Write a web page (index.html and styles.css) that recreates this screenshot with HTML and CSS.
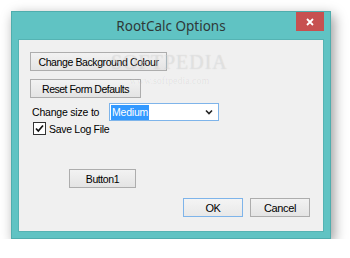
FILE: index.html
```html
<!DOCTYPE html>
<html lang="en">
<head>
    <meta charset="UTF-8">
    <title>RootCalc Options</title>
    <link rel="stylesheet" href="styles.css">
</head>
<body>
    <div class="window">
        <div class="titlebar">
            <span></span>
            <span class="title">RootCalc Options</span>
            <span class="close-btn">
                <svg width="8" height="8" viewBox="0 0 8 8">
                    <path d="M1 1 L7 7 M7 1 L1 7" stroke="#fff" stroke-width="1.8" fill="none"/>
                </svg>
            </span>
        </div>

        <div class="client">
            <button class="btn btn-bg">Change Background Colour</button>
            <button class="btn btn-reset">Reset Form Defaults</button>

            <div class="size-row">
                <span class="size-label">Change size to</span>
                <div class="combo">
                    <span class="combo-value">Medium</span>
                    <svg class="combo-arrow" width="8" height="6" viewBox="0 0 8 6">
                        <path d="M1 1.5 L4 4.5 L7 1.5" stroke="#222" stroke-width="1.6" fill="none"/>
                    </svg>
                </div>
            </div>

            <div class="check-row">
                <span class="checkbox">
                    <svg width="11" height="11" viewBox="0 0 11 11">
                        <path d="M2 5.5 L4.3 8 L9 2.5" stroke="#111" stroke-width="1.7" fill="none"/>
                    </svg>
                </span>
                <span class="check-label">Save Log File</span>
            </div>

            <button class="btn btn-one">Button1</button>

            <div class="footer">
                <button class="btn btn-ok">OK</button>
                <button class="btn btn-cancel">Cancel</button>
            </div>

            <div class="watermark">
                <span class="wm-big">SOFTPEDIA</span>
                <span class="wm-small">www.softpedia.com</span>
            </div>
        </div>
    </div>
</body>
</html>
```

FILE: styles.css
```css
body {
    margin: 0;
    background: #fff;
    font-family: "Liberation Sans", Arial, sans-serif;
    font-size: 10.5px;
    color: #000;
}
.window {
    margin: 11px 0 0 11px;
    width: 318px;
    height: 226px;
    background: #60c3c3;
    border: 1px solid #4fadad;
    box-shadow: 3px 4px 12px rgba(0, 0, 0, 0.4);
    display: flex;
    flex-direction: column;
}
.titlebar {
    height: 27px;
    flex-shrink: 0;
    display: grid;
    grid-template-columns: 1fr auto 1fr;
    align-items: start;
}
.title {
    font-family: "Noto Sans", sans-serif;
    font-size: 13.5px;
    color: #2f3838;
    line-height: 27px;
    padding-top: 1px;
}
.close-btn {
    justify-self: end;
    width: 28px;
    height: 19px;
    margin-right: 6px;
    background: #c75050;
    display: flex;
    align-items: center;
    justify-content: center;
}
.client {
    position: relative;
    flex-shrink: 0;
    margin: 0 6px 6px 6px;
    height: 193px;
    background: #f0f0f0;
    border: 1px solid #55b3b3;
    box-sizing: border-box;
    padding: 12px 13px 0 11px;
    display: flex;
    flex-direction: column;
    align-items: flex-start;
}
.btn {
    font-family: "Liberation Sans", Arial, sans-serif;
    font-size: 10.5px;
    letter-spacing: -0.4px;
    white-space: nowrap;
    color: #000;
    height: 19px;
    padding: 0;
    background: linear-gradient(#f2f2f2, #e4e4e4);
    border: 1px solid #adadad;
    border-radius: 0;
}
.btn-bg {
    width: 137px;
}
.btn-reset {
    width: 111px;
    margin-top: 8px;
    letter-spacing: -0.5px;
}
.size-row {
    display: flex;
    align-items: center;
    margin-top: 5px;
}
.size-label {
    width: 77px;
    padding-left: 2px;
    letter-spacing: -0.2px;
}
.combo {
    width: 110px;
    height: 18px;
    box-sizing: border-box;
    border: 1px solid #7eb4ea;
    background: #fff;
    display: flex;
    align-items: center;
    justify-content: space-between;
    padding: 0 5px 0 1px;
}
.combo-value {
    background: #3399ff;
    color: #fff;
    padding: 1px 1px;
    line-height: 13px;
    letter-spacing: -0.2px;
}
.check-row {
    display: flex;
    align-items: center;
    margin-top: 1px;
    margin-left: 3px;
}
.checkbox {
    width: 11px;
    height: 11px;
    border: 1px solid #333;
    background: #fff;
    display: flex;
}
.check-label {
    margin-left: 3px;
    letter-spacing: -0.3px;
}
.btn-one {
    width: 67px;
    margin-top: 34px;
    margin-left: 39px;
}
.footer {
    align-self: stretch;
    display: flex;
    justify-content: flex-end;
    gap: 7px;
    margin-top: 10px;
}
.btn-ok,
.btn-cancel {
    width: 60px;
    font-size: 11px;
}
.btn-ok {
    border-color: #7eb4ea;
    background: linear-gradient(#f4f4f4, #e8e8e8);
}
.watermark {
    position: absolute;
    left: 92px;
    top: 11px;
    display: flex;
    flex-direction: column;
    align-items: center;
    pointer-events: none;
    font-family: "Liberation Serif", serif;
    color: rgba(255, 255, 255, 0.35);
}
.wm-big {
    font-size: 20px;
    letter-spacing: 1px;
    text-shadow: 0 0 1px rgba(0, 0, 0, 0.15);
}
.wm-small {
    font-size: 10px;
    margin-top: 1px;
    color: rgba(0, 0, 0, 0.07);
}
```
